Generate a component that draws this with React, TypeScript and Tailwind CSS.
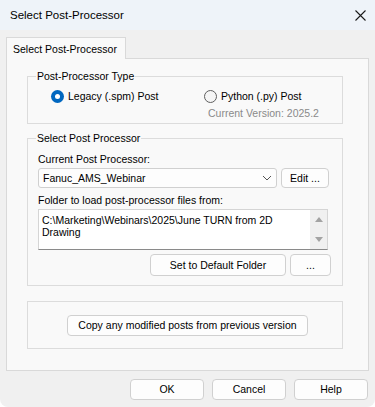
import React from 'react'

function Btn({ children, className = '' }: { children: React.ReactNode; className?: string }) {
  return (
    <button
      className={`flex items-center justify-center rounded-[4px] border border-[#d0d0d0] bg-[#fdfdfd] text-[10.5px] leading-none text-black ${className}`}
    >
      {children}
    </button>
  )
}

function Radio({ checked, label }: { checked?: boolean; label: string }) {
  return (
    <label className="flex items-center gap-[4px]">
      {checked ? (
        <span className="flex h-[13px] w-[13px] items-center justify-center rounded-full bg-[#0067c0]">
          <span className="h-[5px] w-[5px] rounded-full bg-white" />
        </span>
      ) : (
        <span className="h-[13px] w-[13px] rounded-full border border-[#5f5f5f] bg-[#f5f5f5]" />
      )}
      <span>{label}</span>
    </label>
  )
}

export default function App() {
  return (
    <div className="relative h-[407px] w-[375px] overflow-hidden rounded-b-[8px] bg-[#f0f0f0] font-['Liberation_Sans',Arial,sans-serif] text-[10.5px] leading-[13px] text-black">
      {/* title bar */}
      <div className="flex h-[30px] items-center justify-between bg-[#eef3f9] pl-[10px] pr-[9px]">
        <span className="text-[11.5px]">Select Post-Processor</span>
        <svg width="11" height="11" viewBox="0 0 11 11" className="mt-[1px]">
          <path d="M0.5 0.5 L10.5 10.5 M10.5 0.5 L0.5 10.5" stroke="#1a1a1a" strokeWidth="1.1" />
        </svg>
      </div>

      <div className="px-[6px] pt-[7px]">
        {/* tab */}
        <div className="relative z-10 -mb-px flex h-[22px] w-[120px] items-center border border-b-0 border-[#d9d9d9] bg-[#f9f9f9] pl-[6px] pt-[1px]">
          Select Post-Processor
        </div>

        {/* tab panel */}
        <div className="h-[313px] border border-[#d9d9d9] bg-[#f9f9f9] pl-[20px] pt-[11px]">
          {/* type group */}
          <fieldset className="h-[54px] w-[316px] border border-[#dcdcdc] p-0">
            <legend className="ml-[8px] px-[1px]">Post-Processor Type</legend>
            <div className="mt-[7px] flex pl-[23px]">
              <div className="w-[153px]">
                <Radio checked label="Legacy (.spm) Post" />
              </div>
              <Radio label="Python (.py) Post" />
            </div>
            <div className="mt-[4px] pl-[180px] text-[#8a8a8a]">Current Version: 2025.2</div>
          </fieldset>

          {/* select group */}
          <fieldset className="mt-[8px] w-[316px] border border-[#dcdcdc] px-[10px] pb-[9px]">
            <legend className="ml-[-2px] px-[1px]">Select Post Processor</legend>
            <div className="mt-[8px]">Current Post Processor:</div>
            <div className="mt-[2px] flex gap-[4px]">
              <div className="flex h-[20px] w-[239px] items-center justify-between rounded-[3px] border border-[#d0d0d0] bg-[#fdfdfd] pl-[4px] pr-[4px]">
                <span>Fanuc_AMS_Webinar</span>
                <svg width="10" height="6" viewBox="0 0 10 6">
                  <path d="M1 1 L5 5 L9 1" fill="none" stroke="#555" strokeWidth="1" />
                </svg>
              </div>
              <Btn className="h-[20px] w-[48px]">Edit ...</Btn>
            </div>
            <div className="mt-[6px]">Folder to load post-processor files from:</div>
            <div className="mt-[2px] flex h-[41px] w-[290px] border border-[#d5d5d5] border-b-[#8a8a8a] bg-white">
              <div className="flex-1 pl-[3px] pt-[4px] leading-[12px]">
                C:\Marketing\Webinars\2025\June TURN from 2D
                <br />
                Drawing
              </div>
              <div className="flex w-[17px] flex-col items-center justify-between bg-[#f0f0f0] py-[7px]">
                <svg width="8" height="5" viewBox="0 0 8 5">
                  <path d="M4 0 L8 5 L0 5 Z" fill="#a3a3a3" />
                </svg>
                <svg width="8" height="5" viewBox="0 0 8 5">
                  <path d="M0 0 L8 0 L4 5 Z" fill="#a3a3a3" />
                </svg>
              </div>
            </div>
            <div className="mt-[4px] flex justify-end gap-[4px] pr-[1px]">
              <Btn className="h-[22px] w-[136px]">Set to Default Folder</Btn>
              <Btn className="h-[22px] w-[41px] border-[#0067c0]">...</Btn>
            </div>
          </fieldset>

          {/* copy group */}
          <div className="mt-[15px] flex h-[48px] w-[316px] items-center border border-[#dcdcdc] pl-[39px]">
            <Btn className="h-[21px] w-[241px]">Copy any modified posts from previous version</Btn>
          </div>
        </div>

        {/* dialog buttons */}
        <div className="mt-[8px] flex justify-end gap-[8px] pr-[1px]">
          <Btn className="h-[21px] w-[74px]">OK</Btn>
          <Btn className="h-[21px] w-[74px]">Cancel</Btn>
          <Btn className="h-[21px] w-[74px]">Help</Btn>
        </div>
      </div>
    </div>
  )
}
